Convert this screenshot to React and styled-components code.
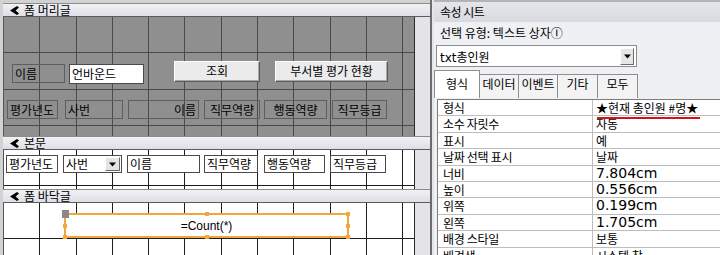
import React from "react";
import styled, { createGlobalStyle } from "styled-components";

const KR = `"Noto Sans CJK KR", "Noto Sans", sans-serif`;
const LATIN = `"DejaVu Sans", "Noto Sans CJK KR", sans-serif`;

const GlobalStyle = createGlobalStyle`
  html, body { margin: 0; padding: 0; }
  body {
    font-family: ${KR};
    font-size: 12px;
    color: #000;
    background: #fff;
  }
`;

const Frame = styled.div`
  width: 720px;
  height: 255px;
  overflow: hidden;
  display: flex;
  background: #d2d2d2;
`;

/* ---------- design view ---------- */

const DesignPane = styled.div`
  width: 427px;
  flex-shrink: 0;
  padding: 3px 0 0 3px;
  display: flex;
  flex-direction: column;
`;

const Bar = styled.div`
  height: ${(p) => p.$h || 17}px;
  box-sizing: border-box;
  display: flex;
  align-items: center;
  gap: 4px;
  padding-left: 7px;
  background: linear-gradient(#f1f1f5, #dedee6);
  border-top: 1px solid #8c8c8c;
  border-bottom: 1px solid #5c5c5c;
  font-size: 12px;
  line-height: 1;
  svg {
    flex-shrink: 0;
  }
`;

const Section = styled.div`
  height: ${(p) => p.$h}px;
  display: flex;
  flex-shrink: 0;
`;

const Canvas = styled.div`
  width: 412px;
  box-sizing: border-box;
  border-left: 1px solid #555;
  border-right: 1px solid #2a2a2a;
  display: flex;
  flex-direction: column;
  padding-top: ${(p) => p.$pt || 0}px;
  background-color: ${(p) => (p.$tone === "gray" ? "#8f8f8f" : "#fff")};
  background-image: ${(p) => {
    const c = p.$tone === "gray" ? "#4a4a4a" : "#1e1e1e";
    return `repeating-linear-gradient(to right, transparent 0 35.3px, ${c} 35.3px 36.3px),
      repeating-linear-gradient(to bottom, transparent 0 35.3px, ${c} 35.3px 36.3px)`;
  }};
`;

const Beyond = styled.div`
  flex: 1;
  background: #e3e3e8;
`;

const Row = styled.div`
  display: flex;
  align-items: flex-start;
  margin-top: ${(p) => p.$mt || 0}px;
`;

const Label = styled.div`
  width: ${(p) => p.$w}px;
  height: 19px;
  margin-left: ${(p) => p.$ml || 0}px;
  margin-top: ${(p) => p.$mt || 0}px;
  box-sizing: border-box;
  border: 1px solid #5e5e5e;
  padding: 0 2px;
  line-height: 17px;
  text-align: ${(p) => p.$align || "left"};
  white-space: nowrap;
  overflow: hidden;
`;

const Field = styled.div`
  position: relative;
  width: ${(p) => p.$w}px;
  height: ${(p) => p.$h || 18}px;
  margin-left: ${(p) => p.$ml || 0}px;
  margin-top: ${(p) => p.$mt || 0}px;
  box-sizing: border-box;
  background: #fff;
  border: 1px solid #4a4a4a;
  padding: 0 2px;
  line-height: ${(p) => (p.$h || 18) - 2}px;
  white-space: nowrap;
  overflow: hidden;
`;

const FieldDrop = styled.span`
  position: absolute;
  right: 1px;
  top: 1px;
  width: 15px;
  height: 14px;
  box-sizing: border-box;
  background: #e4e4e4;
  border: 1px solid;
  border-color: #fff #6a6a6a #6a6a6a #fff;
  display: flex;
  align-items: center;
  justify-content: center;
`;

const Button = styled.div`
  width: ${(p) => p.$w}px;
  height: 21px;
  margin-left: ${(p) => p.$ml || 0}px;
  box-sizing: border-box;
  background: #ebebeb;
  border: 1px solid;
  border-color: #fdfdfd #5a5a5a #5a5a5a #fdfdfd;
  box-shadow: inset -1px -1px 0 #a8a8a8;
  text-align: center;
  line-height: 18px;
  white-space: nowrap;
`;

const Selected = styled.div`
  position: relative;
  width: 285px;
  height: 25px;
  margin-left: 60px;
  margin-top: 5px;
  box-sizing: border-box;
  border: 2px solid #f2a63e;
  background: #fff;
  display: flex;
  align-items: center;
  justify-content: center;
  font-family: "Liberation Sans", Arial, sans-serif;
  font-size: 12px;
`;

const MoveHandle = styled.span`
  position: absolute;
  left: -4px;
  top: -5px;
  width: 7px;
  height: 8px;
  background: #8a8a8a;
`;

const Grip = styled.span`
  position: absolute;
  width: 4px;
  height: 4px;
  background: #f2a63e;
  left: ${(p) => p.$x};
  top: ${(p) => p.$y};
  transform: translate(-50%, -50%);
`;

const SectionIcon = () => (
  <svg width="10" height="9" viewBox="0 0 10 9">
    <path d="M0 4.5 L7 0 L9 1.6 L5.6 4.5 L9 7.4 L7 9 Z" fill="#000" />
  </svg>
);

const Triangle = ({ size = 7 }) => (
  <svg width={size} height={Math.ceil(size / 2) + 1} viewBox="0 0 7 4">
    <path d="M0 0 H7 L3.5 4 Z" fill="#000" />
  </svg>
);

/* ---------- property sheet ---------- */

const Splitter = styled.div`
  width: 4px;
  flex-shrink: 0;
  box-sizing: border-box;
  border-left: 2px solid #6c6c6c;
  background: #e6e6e6;
`;

const PropertyPane = styled.div`
  flex: 1;
  display: flex;
  flex-direction: column;
  background: #eef0f3;
  border-top: 2px solid #b4b4b8;
  overflow: hidden;
`;

const PaneTitle = styled.div`
  height: 20px;
  flex-shrink: 0;
  padding-left: 6px;
  background: linear-gradient(#e4e6ea, #d8dadf);
  line-height: 20px;
  font-size: 12px;
  letter-spacing: -0.5px;
`;

const PaneLine = styled.div`
  height: 21px;
  flex-shrink: 0;
  padding-left: 6px;
  line-height: 21px;
`;

const Combo = styled.div`
  width: 201px;
  height: 22px;
  margin: 2px 0 0 2px;
  flex-shrink: 0;
  box-sizing: border-box;
  background: #fff;
  border: 1px solid #8d8d8d;
  display: flex;
  align-items: center;
  justify-content: space-between;
  padding: 0 2px 0 3px;
  span {
    font-family: ${LATIN};
    font-size: 12px;
  }
`;

const ComboButton = styled.div`
  width: 14px;
  height: 17px;
  box-sizing: border-box;
  background: #e6e6e6;
  border: 1px solid;
  border-color: #fff #6a6a6a #6a6a6a #fff;
  display: flex;
  align-items: center;
  justify-content: center;
`;

const Tabs = styled.div`
  display: flex;
  align-items: flex-end;
  height: 28px;
  margin-top: 3px;
  padding-left: 1px;
  flex-shrink: 0;
`;

const Tab = styled.div`
  width: ${(p) => p.$w}px;
  height: ${(p) => (p.$active ? 28 : 24)}px;
  box-sizing: border-box;
  border: 1px solid #8e8e8e;
  border-bottom: none;
  margin-left: -1px;
  background: ${(p) => (p.$active ? "#fff" : "#f3f3f3")};
  text-align: center;
  padding-top: ${(p) => (p.$active ? 5 : 1)}px;
  line-height: 16px;
  position: relative;
  z-index: ${(p) => (p.$active ? 1 : 0)};
`;

const Grid = styled.div`
  margin: 1px 0 0 3px;
  border-top: 1px solid #7c7c7c;
  border-left: 1px solid #7c7c7c;
  background: #fff;
`;

const PropRow = styled.div`
  display: grid;
  grid-template-columns: 155px 1fr;
  height: 16.4px;
  box-sizing: border-box;
  border-bottom: 1px solid #bdbdbd;
  line-height: 15px;
  white-space: nowrap;
`;

const PropName = styled.div`
  padding-left: 5px;
  border-right: 1px solid #bdbdbd;
  letter-spacing: -0.3px;
`;

const PropValue = styled.div`
  padding-left: 3px;
  font-family: ${(p) => (p.$num ? LATIN : KR)};
  font-size: ${(p) => (p.$num ? 14 : 12)}px;
`;

const Marked = styled.span`
  position: relative;
  &::after {
    content: "";
    position: absolute;
    left: 1px;
    right: -2px;
    bottom: -3px;
    height: 2px;
    background: #d0141b;
  }
`;

const properties = [
  ["형식", "★현재 총인원 #명★", "mark"],
  ["소수 자릿수", "자동"],
  ["표시", "예"],
  ["날짜 선택 표시", "날짜"],
  ["너비", "7.804cm", "num"],
  ["높이", "0.556cm", "num"],
  ["위쪽", "0.199cm", "num"],
  ["왼쪽", "1.705cm", "num"],
  ["배경 스타일", "보통"],
  ["배경색", "시스템 창"],
];

const tabs = [
  ["형식", 46],
  ["데이터", 40],
  ["이벤트", 40],
  ["기타", 41],
  ["모두", 41],
];

export default function App() {
  return (
    <>
      <GlobalStyle />
      <Frame>
        <DesignPane>
          <Bar $h={18}>
            <SectionIcon />폼 머리글
          </Bar>
          <Section $h={119}>
            <Canvas $tone="gray" $pt={44}>
              <Row>
                <Label $w={53} $ml={8} $mt={3}>이름</Label>
                <Field $w={75} $h={20} $ml={4} $mt={3}>언바운드</Field>
                <Button $w={86} $ml={30}>조회</Button>
                <Button $w={113} $ml={15}>부서별 평가 현황</Button>
              </Row>
              <Row $mt={16}>
                <Label $w={51} $ml={3}>평가년도</Label>
                <Label $w={58} $ml={7}>사번</Label>
                <Label $w={71} $ml={5} $align="right">이름</Label>
                <Label $w={56} $ml={5} $align="center">직무역량</Label>
                <Label $w={63} $ml={4} $align="center">행동역량</Label>
                <Label $w={55} $ml={5} $align="center">직무등급</Label>
              </Row>
            </Canvas>
            <Beyond />
          </Section>
          <Bar>
            <SectionIcon />본문
          </Bar>
          <Section $h={39}>
            <Canvas $pt={5}>
              <Row>
                <Field $w={52} $ml={2}>평가년도</Field>
                <Field $w={59} $ml={5}>
                  사번
                  <FieldDrop>
                    <Triangle />
                  </FieldDrop>
                </Field>
                <Field $w={73} $ml={5}>이름</Field>
                <Field $w={54} $ml={4}>직무역량</Field>
                <Field $w={61} $ml={6}>행동역량</Field>
                <Field $w={56} $ml={5}>직무등급</Field>
              </Row>
            </Canvas>
            <Beyond />
          </Section>
          <Bar>
            <SectionIcon />폼 바닥글
          </Bar>
          <Section $h={60}>
            <Canvas $pt={5}>
              <Selected>
                =Count(*)
                <MoveHandle />
                <Grip $x="50%" $y="-1px" />
                <Grip $x="50%" $y="calc(100% + 1px)" />
                <Grip $x="-1px" $y="50%" />
                <Grip $x="-1px" $y="calc(100% + 1px)" />
                <Grip $x="calc(100% + 1px)" $y="-1px" />
                <Grip $x="calc(100% + 1px)" $y="50%" />
                <Grip $x="calc(100% + 1px)" $y="calc(100% + 1px)" />
              </Selected>
            </Canvas>
            <Beyond />
          </Section>
        </DesignPane>

        <Splitter />

        <PropertyPane>
          <PaneTitle>속성 시트</PaneTitle>
          <PaneLine>선택 유형: 텍스트 상자Ⓘ</PaneLine>
          <Combo>
            <span>txt총인원</span>
            <ComboButton>
              <Triangle />
            </ComboButton>
          </Combo>
          <Tabs>
            {tabs.map(([name, w], i) => (
              <Tab key={name} $w={w} $active={i === 0}>
                {name}
              </Tab>
            ))}
          </Tabs>
          <Grid>
            {properties.map(([name, value, kind]) => (
              <PropRow key={name}>
                <PropName>{name}</PropName>
                <PropValue $num={kind === "num"}>
                  {kind === "mark" ? <Marked>{value}</Marked> : value}
                </PropValue>
              </PropRow>
            ))}
          </Grid>
        </PropertyPane>
      </Frame>
    </>
  );
}
